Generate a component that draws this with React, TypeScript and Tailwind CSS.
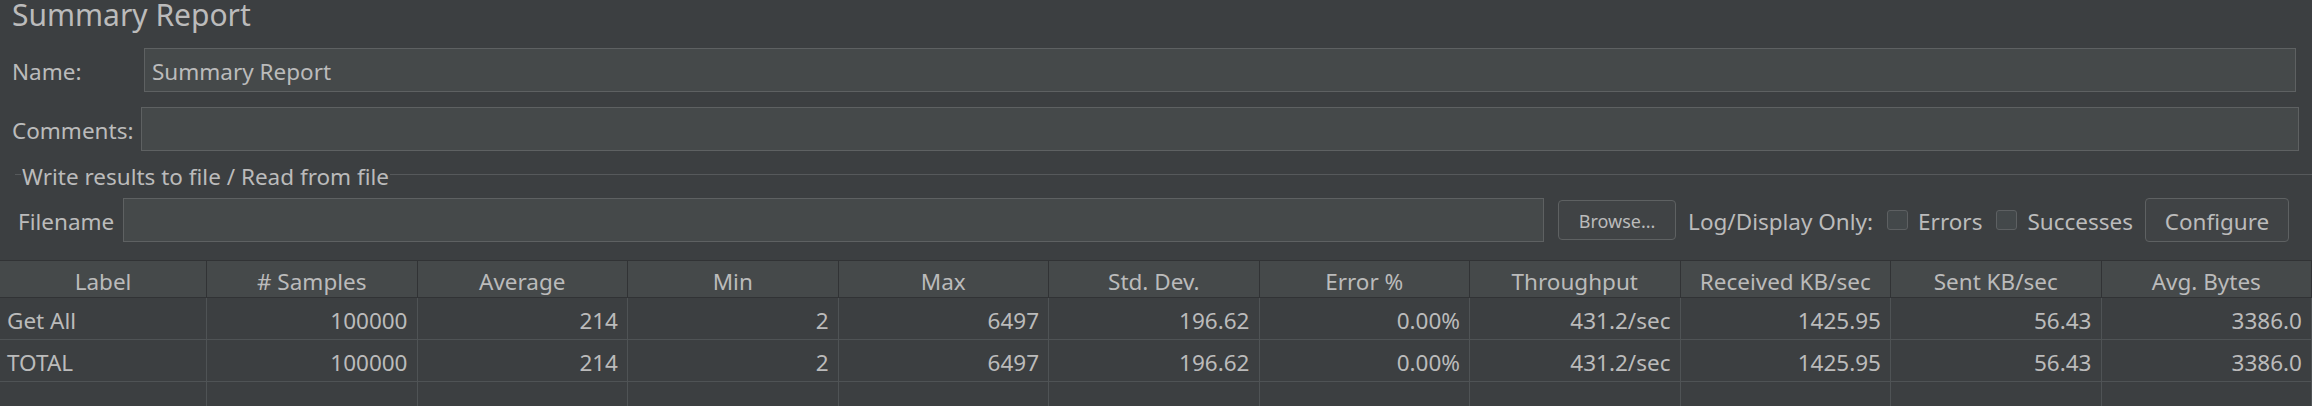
import { FunctionComponent } from "react";

const columns = [
  "Label",
  "# Samples",
  "Average",
  "Min",
  "Max",
  "Std. Dev.",
  "Error %",
  "Throughput",
  "Received KB/sec",
  "Sent KB/sec",
  "Avg. Bytes",
];

const stats = ["100000", "214", "2", "6497", "196.62", "0.00%", "431.2/sec", "1425.95", "56.43", "3386.0"];

const rows: string[][] = [["Get All", ...stats], ["TOTAL", ...stats], Array(11).fill("")];

const Field: FunctionComponent<{ value?: string; className?: string }> = ({ value, className }) => (
  <div
    className={`flex h-[44px] items-center border border-[#5e6162] bg-[#45494a] pl-[7px] pt-[4px] ${className ?? ""}`}
  >
    {value}
  </div>
);

const Checkbox: FunctionComponent<{ label: string; className?: string }> = ({ label, className }) => (
  <div className={`flex items-center ${className ?? ""}`}>
    <span className="h-[20px] w-[21px] rounded-[3px] border border-[#5d6062] bg-[#43484a]" />
    <span className="ml-[10px] pt-[4px]">{label}</span>
  </div>
);

export default function App() {
  return (
    <div className="h-[406px] w-[2312px] overflow-hidden bg-[#3c3f41] font-['Noto_Sans','Open_Sans',sans-serif] text-[22.5px] text-[#bbbbbb]">
      <div className="h-[48px] pl-[12px] text-[30px] leading-[30px]">Summary Report</div>

      <div className="flex h-[44px] items-center pr-[16px]">
        <span className="w-[144px] pl-[12px] pt-[4px]">Name:</span>
        <Field value="Summary Report" className="flex-1" />
      </div>

      <div className="mt-[15px] flex h-[44px] items-center pr-[13px]">
        <span className="w-[141px] pl-[12px] pt-[4px]">Comments:</span>
        <Field className="flex-1" />
      </div>

      <div className="flex h-[47px] items-center">
        <span className="ml-[15px] h-px w-[6px] bg-[#56595b]" />
        <span className="px-[1px] pt-[5px]">Write results to file / Read from file</span>
        <span className="h-px flex-1 bg-[#56595b]" />
      </div>

      <div className="flex h-[44px] items-center pr-[23px]">
        <span className="w-[123px] pl-[18px] pt-[4px]">Filename</span>
        <Field className="flex-1" />
        <button className="ml-[14px] flex h-[40px] w-[118px] items-center justify-center rounded-[4px] border border-[#5e6162] bg-[#404345] pt-[3px] text-[18px] text-[#bbbbbb]">
          Browse...
        </button>
        <span className="ml-[12px] pt-[4px]">Log/Display Only:</span>
        <Checkbox label="Errors" className="ml-[14px]" />
        <Checkbox label="Successes" className="ml-[14px]" />
        <button className="ml-[12px] flex h-[44px] w-[144px] items-center justify-center rounded-[4px] border border-[#5e6162] bg-[#404345] pt-[4px] text-[22.5px] text-[#bbbbbb]">
          Configure
        </button>
      </div>

      <div className="mt-[18px] grid grid-cols-[207px_repeat(10,minmax(0,1fr))]">
        {columns.map((col) => (
          <div
            key={col}
            className="flex h-[38px] items-center justify-center border-t border-r border-b border-[#313335] bg-[#45494a] pt-[6px]"
          >
            {col}
          </div>
        ))}
        {rows.map((row, r) =>
          row.map((cell, c) => (
            <div
              key={`${r}-${c}`}
              className={`flex h-[42px] items-center border-r border-b border-[#4f5355] pt-[4px] ${
                c === 0 ? "justify-start pl-[7px]" : "justify-end pr-[9px]"
              }`}
            >
              {cell}
            </div>
          ))
        )}
      </div>
    </div>
  );
}
